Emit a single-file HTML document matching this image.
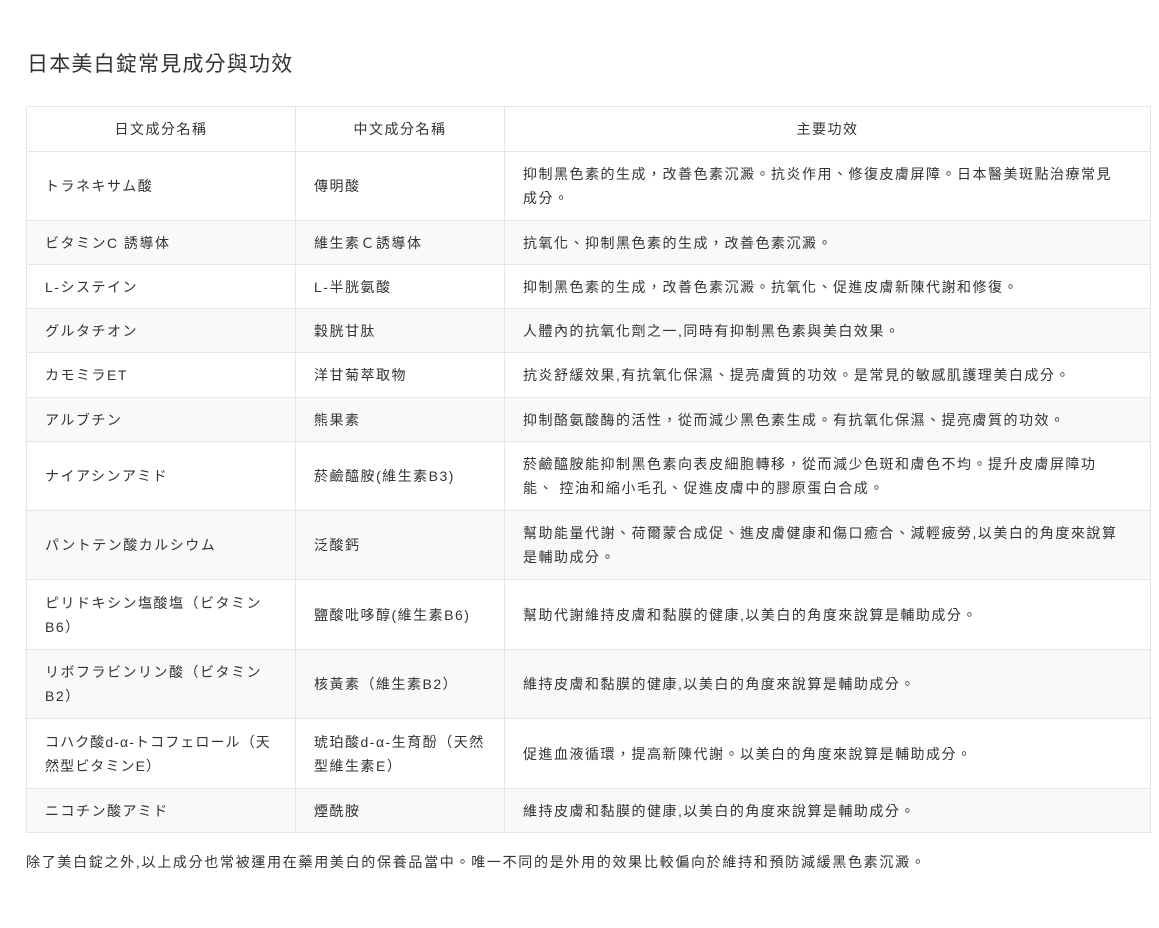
<!DOCTYPE html>
<html><head><meta charset="utf-8"><style>
body{margin:0;background:#fff;font-family:"Liberation Sans","Noto Sans CJK TC",sans-serif;color:#333;}
h2{position:absolute;left:27px;top:50px;margin:0;font-size:21px;font-weight:normal;color:#333;line-height:30px;letter-spacing:1.2px;}
table{position:absolute;left:26px;top:106px;width:1125px;border-collapse:collapse;font-size:14px;line-height:24px;letter-spacing:1.5px;table-layout:fixed;}
td,th{border:1px solid #e6e6e6;padding:0 18px;vertical-align:middle;text-align:left;font-weight:normal;}
th{text-align:center;height:44px;}
tr:nth-child(odd) td{background:#f9f9f9;}
.nw{white-space:nowrap;overflow:visible;}
p{position:absolute;left:26px;top:850px;margin:0;font-size:14px;line-height:24px;letter-spacing:1.7px;}
</style></head><body>
<h2>日本美白錠常見成分與功效</h2>
<table>
<colgroup><col style="width:269px"><col style="width:209px"><col></colgroup>
<tr><th>日文成分名稱</th><th>中文成分名稱</th><th>主要功效</th></tr>
<tr style="height:69px"><td>トラネキサム酸</td><td>傳明酸</td><td class="nw">抑制黑色素的生成，改善色素沉澱。抗炎作用、修復皮膚屏障。日本醫美斑點治療常見<br>成分。</td></tr>
<tr style="height:44px"><td>ビタミンC 誘導体</td><td>維生素Ｃ誘導体</td><td>抗氧化、抑制黑色素的生成，改善色素沉澱。</td></tr>
<tr style="height:44px"><td>L-システイン</td><td>L-半胱氨酸</td><td>抑制黑色素的生成，改善色素沉澱。抗氧化、促進皮膚新陳代謝和修復。</td></tr>
<tr style="height:44px"><td>グルタチオン</td><td>穀胱甘肽</td><td>人體內的抗氧化劑之一,同時有抑制黑色素與美白效果。</td></tr>
<tr style="height:45px"><td>カモミラET</td><td>洋甘菊萃取物</td><td>抗炎舒緩效果,有抗氧化保濕、提亮膚質的功效。是常見的敏感肌護理美白成分。</td></tr>
<tr style="height:44px"><td>アルブチン</td><td>熊果素</td><td>抑制酪氨酸酶的活性，從而減少黑色素生成。有抗氧化保濕、提亮膚質的功效。</td></tr>
<tr style="height:69px"><td>ナイアシンアミド</td><td>菸鹼醯胺(維生素B3)</td><td class="nw">菸鹼醯胺能抑制黑色素向表皮細胞轉移，從而減少色斑和膚色不均。提升皮膚屏障功<br>能、 控油和縮小毛孔、促進皮膚中的膠原蛋白合成。</td></tr>
<tr style="height:69px"><td>パントテン酸カルシウム</td><td>泛酸鈣</td><td>幫助能量代謝、荷爾蒙合成促、進皮膚健康和傷口癒合、減輕疲勞,以美白的角度來說算是輔助成分。</td></tr>
<tr style="height:70px"><td class="nw">ピリドキシン塩酸塩（ビタミン<br>B6）</td><td>鹽酸吡哆醇(維生素B6)</td><td>幫助代謝維持皮膚和黏膜的健康,以美白的角度來說算是輔助成分。</td></tr>
<tr style="height:69px"><td class="nw">リボフラビンリン酸（ビタミン<br>B2）</td><td>核黃素（維生素B2）</td><td>維持皮膚和黏膜的健康,以美白的角度來說算是輔助成分。</td></tr>
<tr style="height:70px"><td class="nw" style="letter-spacing:1.1px">コハク酸d-α-トコフェロール（天<br>然型ビタミンE）</td><td class="nw">琥珀酸d-α-生育酚（天然<br>型維生素E）</td><td>促進血液循環，提高新陳代謝。以美白的角度來說算是輔助成分。</td></tr>
<tr style="height:44px"><td>ニコチン酸アミド</td><td>煙酰胺</td><td>維持皮膚和黏膜的健康,以美白的角度來說算是輔助成分。</td></tr>
</table>
<p>除了美白錠之外,以上成分也常被運用在藥用美白的保養品當中。唯一不同的是外用的效果比較偏向於維持和預防減緩黑色素沉澱。</p>
</body></html>
